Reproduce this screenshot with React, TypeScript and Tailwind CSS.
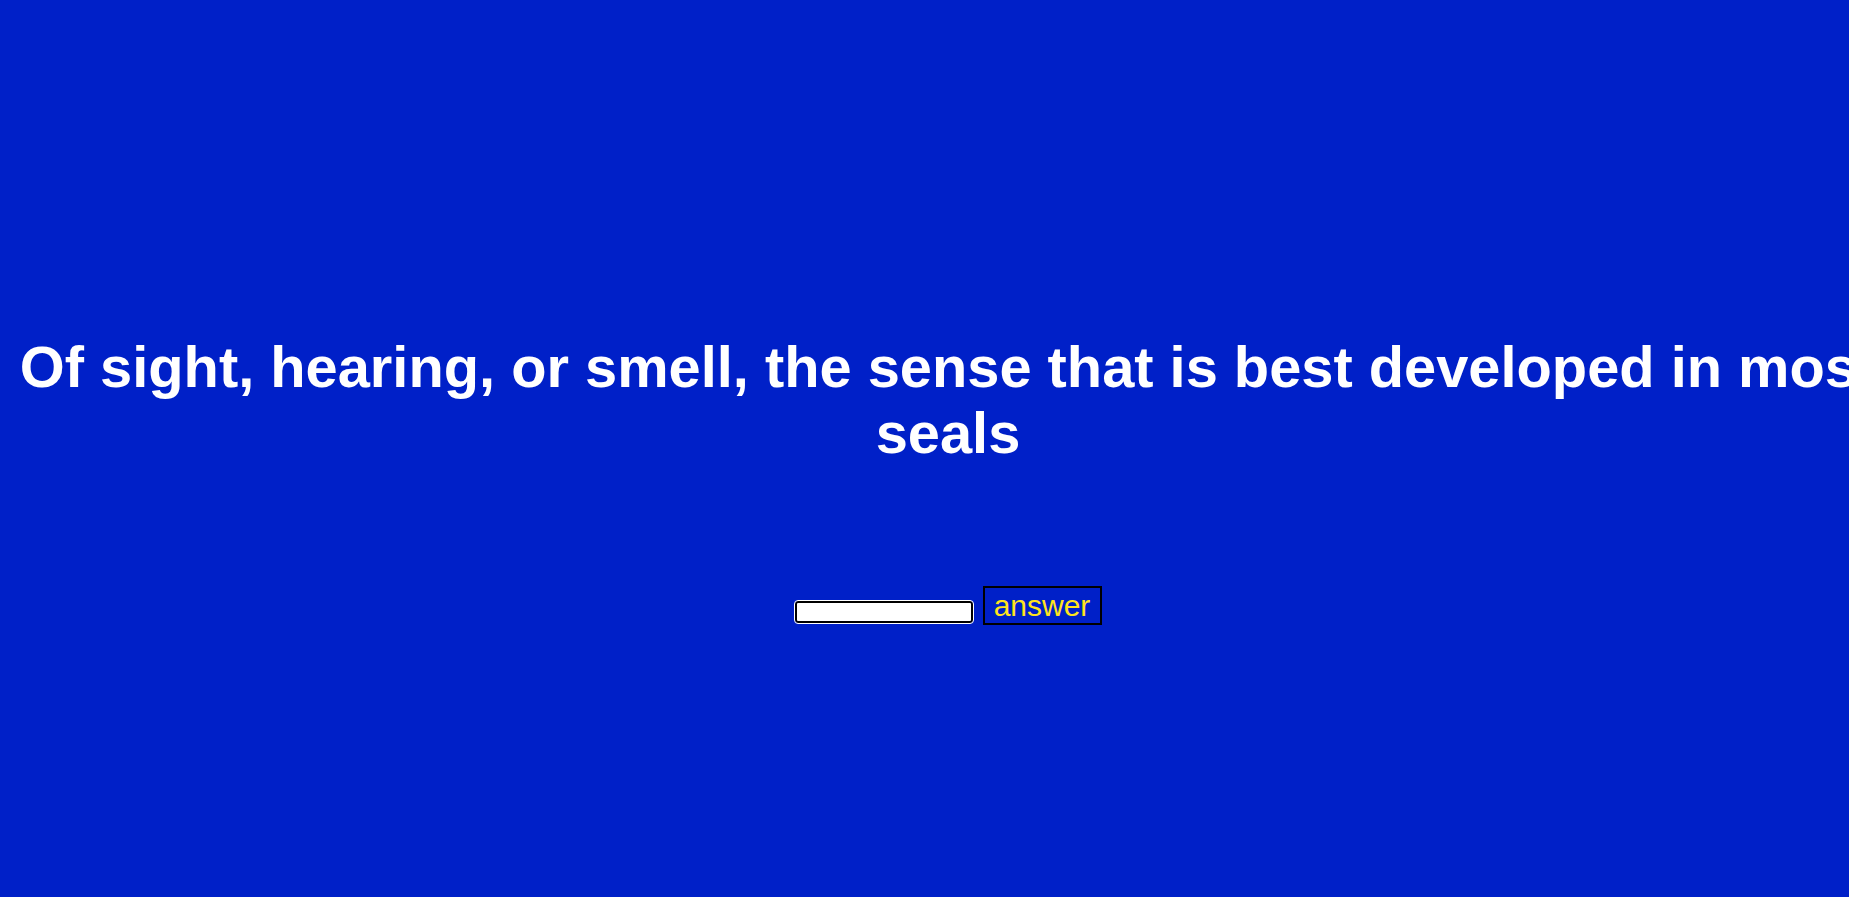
export default function App() {
  return (
    <div className="h-[897px] w-full overflow-hidden bg-[#0020c8]" style={{ fontFamily: '"Liberation Sans", Arial, sans-serif' }}>
      <div className="ml-[13px] w-[1870px] pt-[334px]">
        <h1 className="text-center text-[57.8px] font-bold leading-[66px] text-white">
          Of sight, hearing, or smell, the sense that is best developed in most seals
        </h1>
        <div className="mt-[120px] flex items-start justify-center gap-[10px]">
          <input
            type="text"
            className="mt-[15px] h-[22px] w-[178px] rounded-[3px] border-2 border-black bg-white outline outline-1 outline-white"
          />
          <button className="h-[39px] w-[119px] border-2 border-black bg-[#0020c8] text-[30px] leading-none text-[#ffe41c]">
            answer
          </button>
        </div>
      </div>
    </div>
  );
}
